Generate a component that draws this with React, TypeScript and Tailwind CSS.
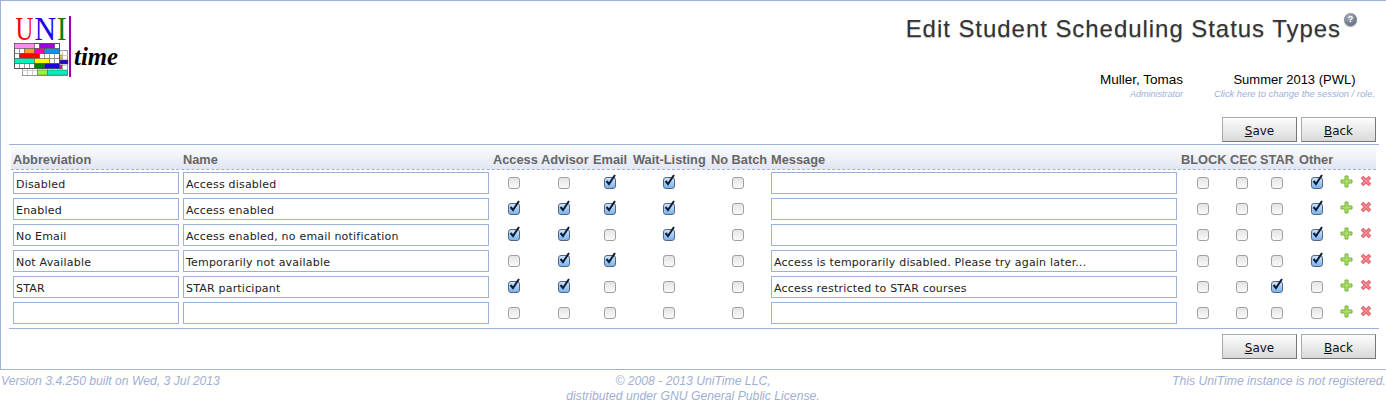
const gridCols =
  "grid grid-cols-[170px_310px_48px_52px_40px_78px_60px_410px_49px_30px_39px_41px_18px_20px]";

const headers = [
  "Abbreviation",
  "Name",
  "Access",
  "Advisor",
  "Email",
  "Wait-Listing",
  "No Batch",
  "Message",
  "BLOCK",
  "CEC",
  "STAR",
  "Other",
];

type Row = {
  abbv: string;
  name: string;
  left: boolean[];
  message: string;
  right: boolean[];
};

const rows: Row[] = [
  {
    abbv: "Disabled",
    name: "Access disabled",
    left: [false, false, true, true, false],
    message: "",
    right: [false, false, false, true],
  },
  {
    abbv: "Enabled",
    name: "Access enabled",
    left: [true, true, true, true, false],
    message: "",
    right: [false, false, false, true],
  },
  {
    abbv: "No Email",
    name: "Access enabled, no email notification",
    left: [true, true, false, true, false],
    message: "",
    right: [false, false, false, true],
  },
  {
    abbv: "Not Available",
    name: "Temporarily not available",
    left: [false, true, true, false, false],
    message: "Access is temporarily disabled. Please try again later...",
    right: [false, false, false, true],
  },
  {
    abbv: "STAR",
    name: "STAR participant",
    left: [true, true, false, false, false],
    message: "Access restricted to STAR courses",
    right: [false, false, true, false],
  },
  {
    abbv: "",
    name: "",
    left: [false, false, false, false, false],
    message: "",
    right: [false, false, false, false],
  },
];

function Logo() {
  const cells = [
    ["#ff8cf0", 14.5, 43.5, 20, 5],
    ["#a000e0", 39.5, 43.5, 15, 5],
    ["#ff9a30", 24.5, 48.5, 10, 5],
    ["#f000c0", 34.5, 48.5, 10, 5],
    ["#1090f0", 44.5, 48.5, 15, 5],
    ["#ff0000", 19.5, 53.5, 20, 5],
    ["#00f0c0", 14.5, 58.5, 20, 5],
    ["#ffff00", 34.5, 58.5, 15, 5],
    ["#008000", 34.5, 63.5, 10, 5],
    ["#2000e0", 44.5, 63.5, 15, 5],
    ["#ffff00", 60, 55, 2, 4],
    ["#2000e0", 60, 60, 8, 4],
    ["#f000c0", 60, 65, 2, 4],
    ["#90ff30", 37.5, 70, 10, 5],
    ["#00f0c0", 47.5, 70, 20, 5],
  ] as const;
  // letters are narrower than the serif face, so squeeze each one
  const letters = [
    ["U", "#ff0000", 15.5, 0.73],
    ["N", "#2000f0", 34.5, 0.88],
    ["I", "#008000", 57, 0.84],
  ] as const;
  return (
    <svg width="120" height="74" viewBox="10 4 120 74" className="block shrink-0">
      <rect x="22.5" y="50.5" width="45" height="25" fill="#fff" stroke="#999" strokeWidth="1" />
      {[55, 60, 65, 70].map((y) => (
        <line key={y} x1="22" x2="68" y1={y + 0.5} y2={y + 0.5} stroke="#ccc" />
      ))}
      {[27, 32, 37, 42, 47, 52, 57, 62].map((x) => (
        <line key={x} x1={x + 0.5} x2={x + 0.5} y1="50" y2="75" stroke="#ccc" />
      ))}
      <rect x="14.5" y="43.5" width="45" height="25" fill="#fff" stroke="#555" strokeWidth="1" />
      {[48.5, 53.5, 58.5, 63.5].map((y) => (
        <line key={y} x1="15" x2="59" y1={y} y2={y} stroke="#888" />
      ))}
      {[19.5, 24.5, 29.5, 34.5, 39.5, 44.5, 49.5, 54.5].map((x) => (
        <line key={x} x1={x} x2={x} y1="44" y2="68" stroke="#999" />
      ))}
      {cells.map(([fill, x, y, w, h]) => (
        <rect key={`${x}-${y}`} x={x} y={y} width={w} height={h} fill={fill} stroke="#555" strokeWidth="0.5" />
      ))}
      {letters.map(([ch, fill, x, sx]) => (
        <text
          key={ch}
          transform={`translate(${x} 40) scale(${sx} 1)`}
          fill={fill}
          fontFamily="'Liberation Serif', serif"
          fontSize="34"
        >
          {ch}
        </text>
      ))}
      <rect x="69" y="16" width="2" height="61" fill="#a000b0" />
      <text
        x="74"
        y="65"
        fontFamily="'Liberation Serif', serif"
        fontStyle="italic"
        fontWeight="700"
        fontSize="25"
        fill="#000"
        textLength="44"
        lengthAdjust="spacingAndGlyphs"
      >
        time
      </text>
    </svg>
  );
}

function HelpIcon() {
  return (
    <span className="ml-[3px] mt-[-2px] flex h-[13px] w-[13px] items-center justify-center rounded-full bg-[radial-gradient(circle_at_40%_30%,#a8b0c0,#4e586c)] font-['Liberation_Sans',sans-serif] text-[9px] font-bold leading-none text-white shadow-[0_1px_1px_#999]">
      ?
    </span>
  );
}

function Checkbox({ checked }: { checked: boolean }) {
  return (
    <div className="flex h-full items-center justify-center pr-[2px]">
      <span
        className={
          checked
            ? "relative mt-[-1px] block h-[12px] w-[12px] rounded-[3px] border border-[#56657f] bg-gradient-to-b from-[#cfe4fb] to-[#79b3ef]"
            : "relative mt-[-1px] block h-[12px] w-[12px] rounded-[3px] border border-[#a0a0a0] bg-gradient-to-b from-[#e4e4e4] to-[#fafafa]"
        }
      >
        {checked && (
          <svg
            width="13"
            height="14"
            viewBox="0 0 13 14"
            className="absolute left-[-1px] top-[-5px]"
          >
            <path
              d="M2.5 8 L5 11 L11 2"
              fill="none"
              stroke="#0f1c33"
              strokeWidth="2"
            />
          </svg>
        )}
      </span>
    </div>
  );
}

function TextBox({ value }: { value: string }) {
  return (
    <div className="flex h-[22px] items-center border border-[#9cb0d8] bg-white pl-[2px] pt-[4px] font-['DejaVu_Sans',sans-serif] text-[11px] tracking-[0.2px] text-[#222]">
      {value}
    </div>
  );
}

function Buttons() {
  return (
    <div className="flex justify-end gap-[4px]">
      {["Save", "Back"].map((label) => (
        <button
          key={label}
          className="h-[25px] w-[75px] border border-[#aaa] border-b-[#777] border-r-[#777] bg-gradient-to-b from-[#fdfdfd] to-[#d9d9d9] pt-[2px] font-['DejaVu_Sans',sans-serif] text-[12px] text-[#111]"
        >
          <span className="underline">{label[0]}</span>
          {label.slice(1)}
        </button>
      ))}
    </div>
  );
}

export default function App() {
  return (
    <div className="h-[408px] w-[1386px] overflow-hidden bg-white font-['Liberation_Sans',sans-serif]">
      <div className="flex h-[370px] flex-col border-b border-l border-t border-[#9cb0d8]">
        <div className="flex h-[116px] justify-between">
          <div className="ml-[9px] mt-[3px]">
            <Logo />
          </div>
          <div className="flex flex-col items-end pr-[11px]">
            <div className="mr-[18px] mt-[14px] flex items-start">
              <h1 className="text-[24px] leading-[27px] tracking-[0.95px] text-[#333] [text-shadow:0_1px_1px_#bbb]">
                Edit Student Scheduling Status Types
              </h1>
              <HelpIcon />
            </div>
            <div className="mt-[30px] flex">
              <div className="flex flex-col items-end">
                <span className="text-[13.5px] leading-[16px] text-black">Muller, Tomas</span>
                <span className="text-[9px] italic leading-[12px] text-[#9cb0d8]">Administrator</span>
              </div>
              <div className="ml-[31px] flex flex-col items-center">
                <span className="text-[13px] leading-[16px] text-black">Summer 2013 (PWL)</span>
                <span className="text-[9.35px] italic leading-[12px] text-[#9cb0d8]">
                  Click here to change the session / role.
                </span>
              </div>
            </div>
          </div>
        </div>

        <div className="pr-[10px]">
          <Buttons />
        </div>

        <div className="ml-[8px] mr-[7px] mt-[2px] border-t border-[#9cb0d8]">
          <div className={`${gridCols} ml-[2px] mt-[2px] h-[23px] w-[1365px] items-end border-b border-dashed border-[#9cb0d8] bg-gradient-to-b from-[#fafbfd] to-[#e2e6f2] pb-[2px] text-[12.8px] font-bold leading-[15px] text-[#666]`}>
            {headers.map((h) => (
              <div key={h} className="whitespace-nowrap pl-[2px]">
                {h}
              </div>
            ))}
          </div>

          <div className="ml-[2px] mt-[2px] flex flex-col gap-[4px]">
            {rows.map((row, i) => (
              <div key={i} className={`${gridCols} h-[22px]`}>
                <div className="pl-[2px] pr-[2px]">
                  <TextBox value={row.abbv} />
                </div>
                <div className="pl-[2px] pr-[2px]">
                  <TextBox value={row.name} />
                </div>
                {row.left.map((c, j) => (
                  <Checkbox key={j} checked={c} />
                ))}
                <div className="pl-[2px] pr-[2px]">
                  <TextBox value={row.message} />
                </div>
                {row.right.map((c, j) => (
                  <Checkbox key={j} checked={c} />
                ))}
                <div className="flex h-full items-center justify-center">
                  <svg width="13" height="13" viewBox="0 0 13 13" className="mt-[-4px] mr-[2px]">
                    <path
                      d="M5 1h3v4h4v3H8v4H5V8H1V5h4z"
                      fill="#a8e060"
                      stroke="#78b040"
                      strokeWidth="1"
                      strokeLinejoin="round"
                    />
                  </svg>
                </div>
                <div className="flex h-full items-center justify-center">
                  <svg width="12" height="12" viewBox="0 0 12 12" className="mt-[-4px]">
                    <path
                      d="M2 2 L10 10 M10 2 L2 10"
                      fill="none"
                      stroke="#e05a64"
                      strokeWidth="3.6"
                    />
                    <path
                      d="M2.5 2.5 L9.5 9.5 M9.5 2.5 L2.5 9.5"
                      fill="none"
                      stroke="#f49098"
                      strokeWidth="1.6"
                    />
                  </svg>
                </div>
              </div>
            ))}
          </div>
        </div>

        <div className="ml-[8px] mr-[7px] mt-[4px] border-t border-[#9cb0d8] pr-[3px] pt-[5px]">
          <Buttons />
        </div>
      </div>

      <div className="grid grid-cols-3 text-[12.2px] italic leading-[15px] text-[#9fb0d4]">
        <div className="pl-[1px] pt-[4px]">Version 3.4.250 built on Wed, 3 Jul 2013</div>
        <div className="pt-[4px] text-center">
          © 2008 - 2013 UniTime LLC,
          <br />
          distributed under GNU General Public License.
        </div>
        <div className="pt-[4px] text-right">This UniTime instance is not registered.</div>
      </div>
    </div>
  );
}
